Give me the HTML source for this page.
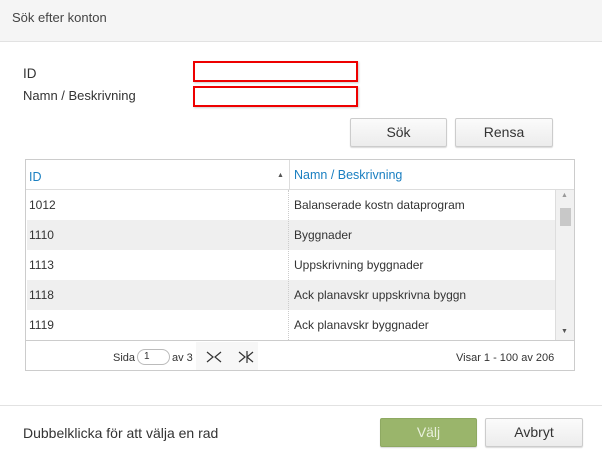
<!DOCTYPE html><html><head><style>
*{margin:0;padding:0;box-sizing:border-box}
body{width:602px;height:457px;background:#fff;font-family:"Liberation Sans",sans-serif;color:#333;position:relative;overflow:hidden;font-size:13px}
.a{position:absolute}
.hdr{left:0;top:0;width:602px;height:42px;background:#f5f5f5;border-bottom:1px solid #e2e2e2}
.inp{border:2px solid #e00;height:21px;width:165px;background:#fff;box-shadow:1px 1px 2px rgba(0,0,0,.2)}
.btn{border:1px solid #ccc;border-radius:2px;background:linear-gradient(#fbfbfb,#ececec);text-align:center;font-size:14px;line-height:27px;height:29px;box-shadow:0 1px 1px rgba(0,0,0,.15)}
.row{position:absolute;left:1px;width:529px;height:30px;font-size:12px;line-height:30px}
.row span{position:absolute}
.g{background:#efefef}
</style></head><body>
<div class="a hdr"></div>
<div class="a" style="left:12px;top:10px;font-size:13px;color:#444">Sök efter konton</div>
<div class="a" style="left:23px;top:66px;font-size:13.5px">ID</div>
<div class="a" style="left:23px;top:88px;font-size:13px">Namn / Beskrivning</div>
<div class="a inp" style="left:193px;top:61px"></div>
<div class="a inp" style="left:193px;top:86px"></div>
<div class="a btn" style="left:350px;top:118px;width:97px">Sök</div>
<div class="a btn" style="left:455px;top:118px;width:98px">Rensa</div>
<div class="a" style="left:25px;top:159px;width:550px;height:212px;border:1px solid #ccc">
 <div class="a" style="left:0;top:0;width:548px;height:30px;border-bottom:1px solid #ddd;color:#1a7fc1;font-size:12.5px">
  <span class="a" style="left:3px;top:10px">ID</span>
  <span class="a" style="left:251px;top:12px;font-size:7px;color:#555">▲</span>
  <span class="a" style="left:263px;top:0;border-left:1px solid #ddd;height:30px;line-height:30px;padding-left:4px">Namn / Beskrivning</span>
 </div>
 <div class="a" style="left:0;top:30px;width:530px;height:150px;overflow:hidden">
  <div class="row" style="top:0"><span style="left:2px">1012</span><span style="left:267px">Balanserade kostn dataprogram</span></div>
  <div class="row g" style="top:30px"><span style="left:2px">1110</span><span style="left:267px">Byggnader</span></div>
  <div class="row" style="top:60px"><span style="left:2px">1113</span><span style="left:267px">Uppskrivning byggnader</span></div>
  <div class="row g" style="top:90px"><span style="left:2px">1118</span><span style="left:267px">Ack planavskr uppskrivna byggn</span></div>
  <div class="row" style="top:120px"><span style="left:2px">1119</span><span style="left:267px">Ack planavskr byggnader</span></div>
  <div class="a" style="left:262px;top:0;height:150px;border-left:1px dotted #ccc"></div>
 </div>
 <div class="a" style="left:529px;top:30px;width:19px;height:150px;background:#f1f1f1;border-left:1px solid #ddd">
  <div class="a" style="left:5px;top:2px;font-size:7px;color:#999">▲</div>
  <div class="a" style="left:4px;top:18px;width:11px;height:18px;background:#c8c8c8"></div>
  <div class="a" style="left:5px;top:138px;font-size:7px;color:#555">▼</div>
 </div>
 <div class="a" style="left:0;top:180px;width:548px;border-top:1px solid #ccc;height:30px;font-size:11px">
  <span class="a" style="left:87px;top:11px">Sida</span>
  <span class="a" style="left:111px;top:8px;width:33px;height:16px;border:1px solid #bbb;border-radius:8px;padding-left:6px;line-height:14px;font-size:10px">1</span>
  <span class="a" style="left:146px;top:11px">av 3</span>
  <span class="a" style="left:170px;top:1px;width:62px;height:28px;background:#f7f7f7"></span>
  <svg class="a" style="left:180px;top:9px" width="50" height="14" viewBox="0 0 50 14" fill="none" stroke="#333" stroke-width="1.2"><path d="M1 2l6 5-6 5M15 2l-6 5 6 5M33 2l6 5-6 5M41 1v12M47 2l-6 5 6 5"/></svg>
  <span class="a" style="left:430px;top:11px">Visar 1 - 100 av 206</span>
 </div>
</div>
<div class="a" style="left:0;top:405px;width:602px;border-top:1px solid #e2e2e2"></div>
<div class="a" style="left:23px;top:425px;font-size:14px">Dubbelklicka för att välja en rad</div>
<div class="a btn" style="left:380px;top:418px;width:97px;background:#9ab56b;border-color:#8ea962;color:#e8f0dc">Välj</div>
<div class="a btn" style="left:485px;top:418px;width:98px">Avbryt</div>
</body></html>
